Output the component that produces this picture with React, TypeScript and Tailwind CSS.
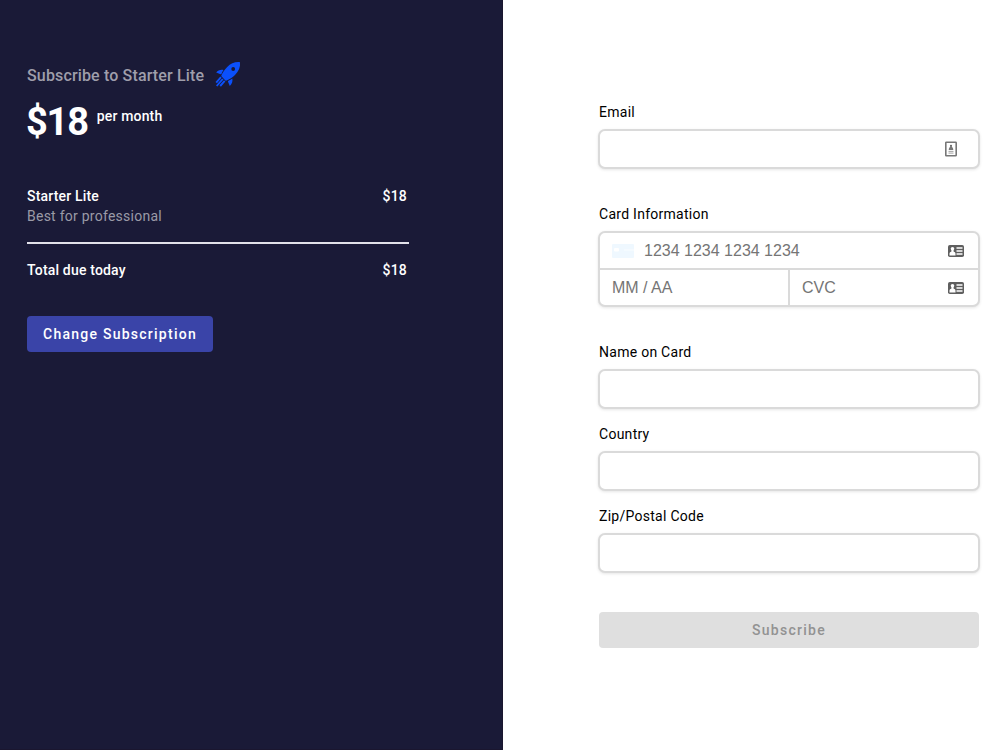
import { useState } from 'react';

const fieldClass =
  'flex h-10 items-center rounded-[7px] border-2 border-[#dadada] bg-white shadow-[0_1px_3px_rgba(0,0,0,0.1)]';

const labelClass = 'mb-[7px] block pl-px text-sm leading-5 tracking-[0.27px] text-black';

function RocketIcon() {
  return (
    <svg className="h-[26px] w-[26px]" viewBox="0 0 26 26" fill="#0b50fb">
      <path d="M25 1.2C20.4.6 15.7 2.4 12.2 6.1 9.8 8.6 7.6 11.6 6.4 14.3c-.2.5-.1.9.2 1.3l3.8 3.8c.4.4.8.4 1.3.2 2.7-1.3 5.9-3.3 8.3-5.7C23.7 10.2 25.6 5.8 25 1.2zM18.2 9.9a1.9 1.9 0 1 1 0-3.8 1.9 1.9 0 0 1 0 3.8z" fillRule="evenodd" />
      <path d="M8.6 9C5.6 8.4 3 9.2 1.2 11.5l4.3 1.8c.4.1.7 0 .9-.4.6-1.4 1.3-2.7 2.2-3.9z" />
      <path d="M17.3 17.5c.6 2.8-.2 5.2-2.5 7.4l-1.8-4.2c-.1-.4 0-.7.4-.9 1.4-.7 2.8-1.4 3.9-2.3z" />
      <g stroke="#0b50fb" strokeWidth="1.9">
        <path d="M6 16.1 1.2 21.6" />
        <path d="M7.8 18 1.7 25" />
        <path d="M9.7 19.9 5.2 25" />
      </g>
    </svg>
  );
}

function ContactIcon() {
  return (
    <svg className="h-4 w-3" viewBox="0 0 12 16" fill="none">
      <rect x="0.8" y="1.2" width="10.4" height="13.6" rx="0.6" stroke="#777" strokeWidth="1.6" />
      <circle cx="6" cy="4.9" r="1.1" fill="#666" />
      <path d="M3.7 9c.2-2 1-3.2 2.3-3.2S8.1 7 8.3 9z" fill="#777" />
      <path d="M3.5 10.4h5M3.5 12.1h5" stroke="#999" strokeWidth="0.9" />
    </svg>
  );
}

function IdCardIcon() {
  return (
    <svg className="h-3 w-4" viewBox="0 0 16 12">
      <rect width="16" height="12" rx="1.8" fill="#5f5f5f" />
      <circle cx="4.5" cy="3.8" r="1.8" fill="#fff" />
      <path d="M1.5 10.4V8.6c0-1.1.8-1.8 1.8-1.9l.2-1.6h2l.2 1.6c1 .1 1.8.8 1.8 1.9v1.8z" fill="#fff" />
      <path d="M8.5 3h6M8.5 6h6M8.5 9h6" stroke="#fff" strokeWidth="1.5" />
    </svg>
  );
}

function CardBrandIcon() {
  return (
    <svg className="h-[14px] w-[22px]" viewBox="0 0 22 14">
      <rect width="22" height="14" rx="1" fill="#eff8ff" />
      <rect x="2" y="4" width="5" height="3.5" rx="1" fill="#fff" />
      <path d="M12 6h10" stroke="#fafdff" />
    </svg>
  );
}

function TextField({ label, name }: { label: string; name: string }) {
  const [value, setValue] = useState('');

  return (
    <div>
      <label htmlFor={name} className={labelClass}>{label}</label>
      <div className={fieldClass}>
        <input
          id={name}
          value={value}
          onChange={(e) => setValue(e.target.value)}
          className="h-full w-full min-w-0 flex-1 bg-transparent px-3 outline-none"
        />
        {name === 'email' && (
          <div className="mr-[21px]">
            <ContactIcon />
          </div>
        )}
      </div>
    </div>
  );
}

function Summary() {
  return (
    <section className="h-full w-[503px] shrink-0 border-r border-b border-[#1a162f] bg-[#1a1a37] pt-[61px] pl-[27px] text-white">
      <div className="flex h-[26px] items-center gap-[11px]">
        <h1 className="pt-[3px] text-base leading-6 font-medium tracking-[0.15px] text-[#9f9eab]">Subscribe to Starter Lite</h1>
        <RocketIcon />
      </div>

      <div className="mt-[11px] flex items-start gap-2">
        <span className="-ml-px text-[38px] leading-[48px] font-bold tracking-[-1.2px]">$18</span>
        <span className="mt-2 ml-px text-sm leading-5 font-medium tracking-[0.15px]">per month</span>
      </div>

      <div className="mt-10 w-[382px] text-sm leading-5 font-medium tracking-[0.18px]">
        <div className="flex justify-between pr-[2px]">
          <span>Starter Lite</span>
          <span>$18</span>
        </div>
        <p className="font-normal tracking-[0.25px] text-[#9b9aa7]">Best for professional</p>
        <hr className="mt-4 border-t-2 border-[#e2e1e9]" />
        <div className="mt-4 flex justify-between pr-[2px]">
          <span>Total due today</span>
          <span>$18</span>
        </div>
      </div>

      <button className="mt-9 h-9 w-[186px] rounded bg-[#3a44a8] text-sm font-medium tracking-[1.25px]">
        Change Subscription
      </button>
    </section>
  );
}

function CardFields() {
  const inputClass =
    "h-full w-full min-w-0 flex-1 bg-transparent font-['Liberation_Sans',sans-serif] text-base outline-none placeholder:text-[#757575]";

  return (
    <div>
      <span className={labelClass}>Card Information</span>
      <div className="h-[76px] rounded-[7px] border-2 border-[#dadada] bg-white shadow-[0_1px_3px_rgba(0,0,0,0.1)]">
        <div className="flex h-[37px] items-center border-b-2 border-[#dadada] pr-[14px] pl-3">
          <CardBrandIcon />
          <input className={`${inputClass} ml-[10px]`} placeholder="1234 1234 1234 1234" />
          <IdCardIcon />
        </div>
        <div className="flex h-[35px] items-center">
          <div className="h-full w-[190px] border-r-2 border-[#dadada] px-3">
            <input className={inputClass} placeholder="MM / AA" />
          </div>
          <div className="flex h-full flex-1 items-center pr-[14px] pl-3">
            <input className={inputClass} placeholder="CVC" />
            <IdCardIcon />
          </div>
        </div>
      </div>
    </div>
  );
}

export default function App() {
  return (
    <main className="flex h-screen overflow-hidden bg-white font-[Roboto,sans-serif]">
      <Summary />
      <form className="ml-[95px] w-[382px] shrink-0 pt-[102px]" onSubmit={(e) => e.preventDefault()}>
        <TextField label="Email" name="email" />
        <div className="mt-[35px]">
          <CardFields />
        </div>
        <div className="mt-[35px] flex flex-col gap-[15px]">
          <TextField label="Name on Card" name="name" />
          <TextField label="Country" name="country" />
          <TextField label="Zip/Postal Code" name="zip" />
        </div>
        <div className="mt-[39px] px-px">
          <button disabled className="h-9 w-full rounded bg-[#dfdfdf] text-sm font-medium tracking-[1.25px] text-[#929292]">
            Subscribe
          </button>
        </div>
      </form>
    </main>
  );
}
